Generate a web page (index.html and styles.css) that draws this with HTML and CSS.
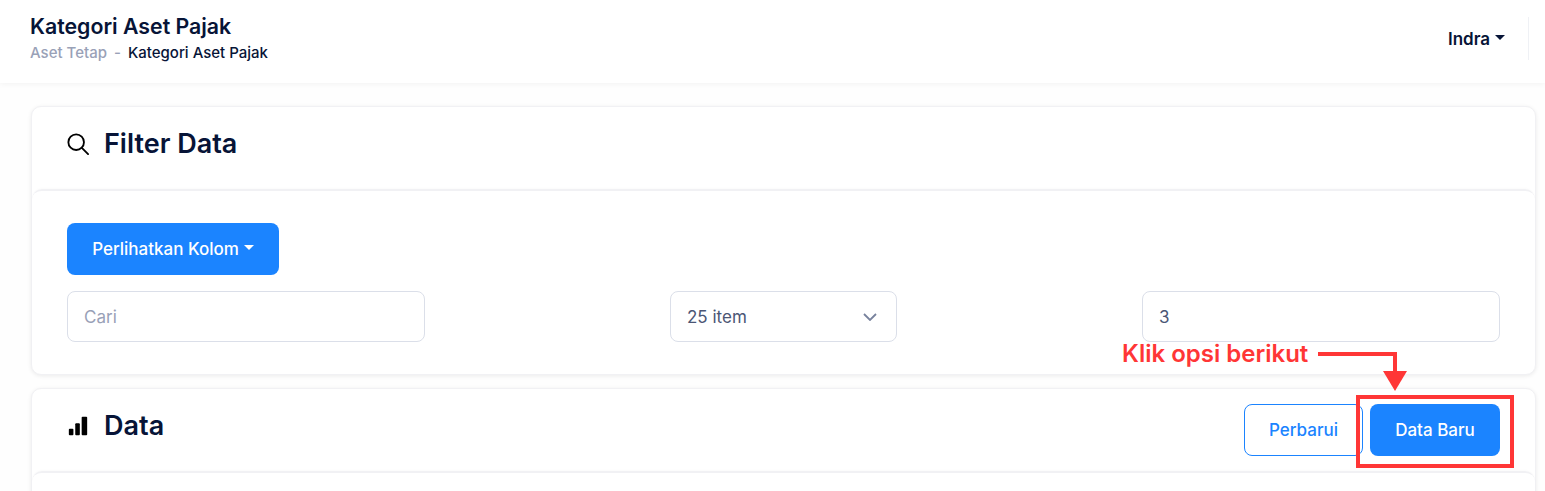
FILE: index.html
```html
<!DOCTYPE html>
<html lang="en">
<head>
    <meta charset="UTF-8">
    <meta name="viewport" content="width=device-width, initial-scale=1.0">
    <title>Kategori Aset Pajak</title>
    <link rel="stylesheet" href="styles.css">
</head>
<body>
    <header class="topbar">
        <div class="page-title">
            <h1>Kategori Aset Pajak</h1>
            <div class="breadcrumb">
                <span class="crumb-muted">Aset Tetap</span>
                <span class="crumb-sep">-</span>
                <span>Kategori Aset Pajak</span>
            </div>
        </div>
        <div class="user-menu">
            <span class="user-name">Indra</span>
            <span class="caret"></span>
        </div>
    </header>

    <main class="content">
        <section class="card">
            <div class="card-head">
                <div class="head-title">
                    <svg class="head-icon" viewBox="0 0 24 24" fill="none" stroke="#000" stroke-width="2">
                        <circle cx="10" cy="10" r="8.5"/>
                        <path d="M16.2 16.2 L23 23" stroke-linecap="round"/>
                    </svg>
                    <h2>Filter Data</h2>
                </div>
            </div>
            <div class="card-body">
                <button class="btn btn-primary btn-columns" type="button">Perlihatkan Kolom<span class="caret caret-white"></span></button>
                <div class="filter-row">
                    <div class="field field-wide placeholder">Cari</div>
                    <div class="field field-select">
                        <span>25 item</span>
                        <svg class="chevron" viewBox="0 0 14 8" fill="none" stroke="#78829d" stroke-width="1.8">
                            <path d="M1 1 L7 7 L13 1"/>
                        </svg>
                    </div>
                    <div class="field field-wide">3</div>
                </div>
            </div>
        </section>

        <section class="card card-data">
            <div class="card-head card-head-split">
                <div class="head-title">
                    <svg class="head-icon" viewBox="0 0 24 24" fill="#000">
                        <rect x="2" y="15" width="5" height="7" rx="1"/>
                        <rect x="9" y="9" width="5" height="13" rx="1"/>
                        <rect x="16" y="2" width="6" height="20" rx="1"/>
                    </svg>
                    <h2>Data</h2>
                </div>
                <div class="head-actions">
                    <button class="btn btn-outline" type="button">Perbarui</button>
                    <button class="btn btn-primary btn-new" type="button">Data Baru</button>
                </div>
            </div>
            <div class="card-body card-body-rest"></div>
        </section>
    </main>

    <!-- annotation on top of the screenshot -->
    <div class="note-text">Klik opsi berikut</div>
    <svg class="note-arrow" viewBox="0 0 100 40" fill="none">
        <path d="M2 3 H79 V22" stroke="#ff3636" stroke-width="4"/>
        <path d="M67 20 H91 L79 40 Z" fill="#ff3636"/>
    </svg>
    <div class="note-box"></div>
</body>
</html>
```

FILE: styles.css
```css
* {
    box-sizing: border-box;
}
html,
body {
    height: 491px;
    overflow: hidden;
}
body {
    margin: 0;
    background-color: #fefefe;
    font-family: Inter, "Liberation Sans", sans-serif;
    color: #071437;
    position: relative;
}
.topbar {
    display: flex;
    justify-content: space-between;
    align-items: center;
    height: 83px;
    padding: 0 16px 0 30px;
    background-color: #fff;
    box-shadow: 0 1px 6px rgba(0, 0, 0, 0.05);
}
.page-title {
    padding-bottom: 9px;
}
.topbar h1 {
    margin: 0 0 6px;
    font-size: 21.3px;
    line-height: 24px;
    font-weight: 600;
}
.breadcrumb {
    display: flex;
    gap: 7px;
    font-size: 15px;
    line-height: 17px;
    font-weight: 500;
}
.crumb-muted,
.crumb-sep {
    color: #99a1b7;
}
.user-menu {
    display: flex;
    align-items: center;
    height: 43px;
    margin-bottom: 6px;
    padding-right: 23px;
    border-right: 1px solid #eff1f5;
    font-size: 17px;
    font-weight: 600;
}
.caret {
    width: 0;
    height: 0;
    margin: 0 0 3px 5px;
    border-left: 5px solid transparent;
    border-right: 5px solid transparent;
    border-top: 5px solid #071437;
}
.caret-white {
    border-top-color: #fff;
}
.content {
    display: flex;
    flex-direction: column;
    gap: 13px;
    padding: 23px 9px 0 31px;
}
.card {
    background-color: #fff;
    border: 1px solid #f1f1f4;
    border-radius: 10px;
    box-shadow: 0 1px 4px rgba(0, 0, 0, 0.08);
}
.card-head {
    display: flex;
    align-items: center;
    height: 82px;
    padding: 0 35px;
}
.card-head-split {
    justify-content: space-between;
}
.head-title {
    display: flex;
    align-items: center;
    gap: 15px;
    padding-bottom: 8px;
}
.head-actions {
    display: flex;
    gap: 7px;
}
.head-icon {
    width: 22px;
    height: 22px;
}
.card-head h2 {
    margin: 0;
    font-size: 27px;
    line-height: 32px;
    font-weight: 600;
}
.card-body {
    height: 185px;
    padding: 32px 35px;
    border: 1px solid #f1f1f4;
    border-width: 2px 0 0;
    border-radius: 10px;
    box-shadow: 0 -1px 2px rgba(0, 0, 0, 0.02);
}
.card-body-rest {
    height: 40px;
}
.btn {
    height: 52px;
    border-radius: 8px;
    border: 1px solid transparent;
    font-family: inherit;
    font-size: 17px;
    font-weight: 500;
}
.btn-primary {
    background-color: #1b84ff;
    color: #fff;
}
.btn-columns {
    display: flex;
    align-items: center;
    justify-content: center;
    width: 212px;
    padding: 0;
}
.btn-new {
    width: 130px;
    padding: 0;
}
.btn-outline {
    width: 119px;
    padding: 0;
    background-color: #fff;
    border-color: #1b84ff;
    color: #1b84ff;
}
.filter-row {
    display: flex;
    justify-content: space-between;
    margin-top: 16px;
}
.field {
    display: flex;
    align-items: center;
    height: 51px;
    padding: 0 16px;
    border: 1px solid #dbdfe9;
    border-radius: 8px;
    font-size: 17px;
    color: #4b5675;
}
.field-wide {
    width: 358px;
}
.field-select {
    justify-content: space-between;
    width: 227px;
    padding: 0 19px 0 16px;
}
.placeholder {
    color: #99a1b7;
}
.chevron {
    width: 14px;
    height: 8px;
}
.note-text {
    position: absolute;
    left: 1122px;
    top: 340px;
    font-size: 24px;
    line-height: 28px;
    font-weight: 600;
    color: #ff3636;
}
.note-arrow {
    position: absolute;
    left: 1316px;
    top: 351px;
    width: 100px;
    height: 40px;
}
.note-box {
    position: absolute;
    left: 1356px;
    top: 395px;
    width: 158px;
    height: 73px;
    border: 4px solid #ff3636;
}
```
